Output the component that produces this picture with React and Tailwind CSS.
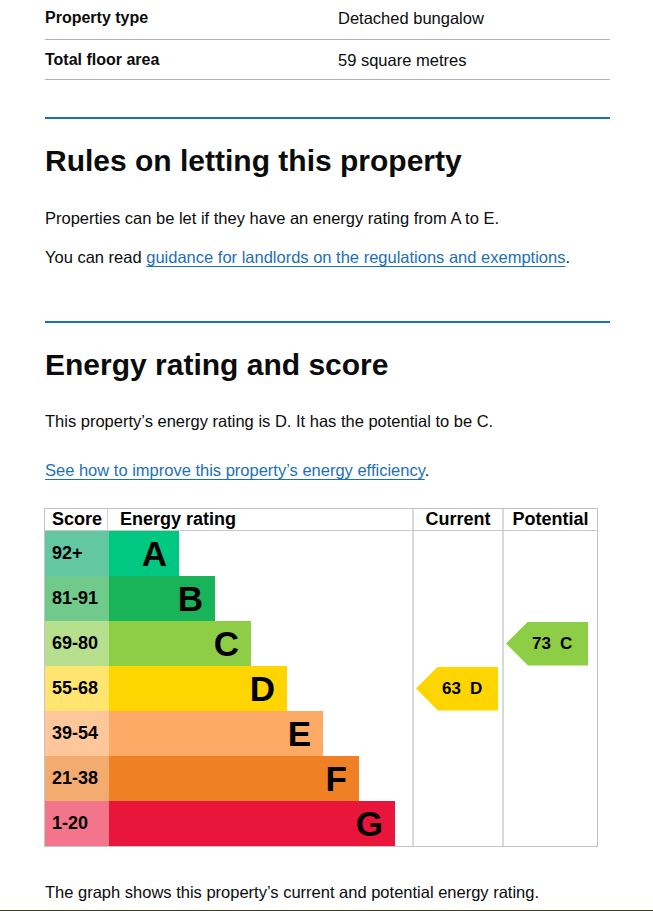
import React from "react";

const rows = [
  { score: "92+", letter: "A", w: "w-[70px]", bar: "bg-[#00c781]", bg: "bg-[#64c7a3]" },
  { score: "81-91", letter: "B", w: "w-[106px]", bar: "bg-[#19b459]", bg: "bg-[#6fca8c]" },
  { score: "69-80", letter: "C", w: "w-[142px]", bar: "bg-[#8dce46]", bg: "bg-[#b6df8e]" },
  { score: "55-68", letter: "D", w: "w-[178px]", bar: "bg-[#ffd500]", bg: "bg-[#ffe46f]" },
  { score: "39-54", letter: "E", w: "w-[214px]", bar: "bg-[#fcaa65]", bg: "bg-[#fec79b]" },
  { score: "21-38", letter: "F", w: "w-[250px]", bar: "bg-[#ef8023]", bg: "bg-[#f3ab70]" },
  { score: "1-20", letter: "G", w: "w-[286px]", bar: "bg-[#e9153b]", bg: "bg-[#f3758c]" },
];

function Arrow({ num, letter, color }) {
  return (
    <div
      className={`ml-[2px] w-[82px] h-[44px] ${color} [clip-path:polygon(0_50%,22px_0,100%_0,100%_100%,22px_100%)] flex items-center pl-[26px] gap-[9px] text-[17px] font-bold text-black leading-none`}
    >
      <span>{num}</span>
      <span>{letter}</span>
    </div>
  );
}

function Slots({ index, children }) {
  return (
    <div className="flex flex-col">
      {rows.map((r, i) => (
        <div key={r.letter} className="h-[45px] flex items-center">
          {i === index ? children : null}
        </div>
      ))}
    </div>
  );
}

export default function App() {
  return (
    <div className="bg-white text-[#0b0c0c] font-['Liberation_Sans',Arial,sans-serif]">
      <div className="pl-[45px] pr-[43px]">
        <dl className="text-[16.5px] leading-[20px]">
          <div className="flex border-b border-[#b1b4b6] pt-[8px] pb-[11px]">
            <dt className="w-[293px] font-bold text-[16px]">Property type</dt>
            <dd>Detached bungalow</dd>
          </div>
          <div className="flex border-b border-[#b1b4b6] pt-[10px] pb-[9px]">
            <dt className="w-[293px] font-bold text-[16px]">Total floor area</dt>
            <dd>59 square metres</dd>
          </div>
        </dl>

        <div className="mt-[37px] h-[2px] bg-[#1d70b8]" />
        <h2 className="mt-[25px] text-[30px] leading-[34px] font-bold">
          Rules on letting this property
        </h2>
        <p className="mt-[28px] text-[16.5px] leading-[24px]">
          Properties can be let if they have an energy rating from A to E.
        </p>
        <p className="mt-[15px] text-[16.5px] leading-[24px]">
          You can read{" "}
          <a
            href="#"
            className="text-[#1d70b8] underline decoration-1 underline-offset-[3px]"
          >
            guidance for landlords on the regulations and exemptions
          </a>
          .
        </p>

        <div className="mt-[52px] h-[2px] bg-[#1d70b8]" />
        <h2 className="mt-[25px] text-[30px] leading-[34px] font-bold">
          Energy rating and score
        </h2>
        <p className="mt-[27px] text-[16.5px] leading-[24px]">
          This property’s energy rating is D. It has the potential to be C.
        </p>
        <p className="mt-[25px] text-[16.5px] leading-[24px]">
          <a
            href="#"
            className="text-[#1d70b8] underline decoration-1 underline-offset-[3px]"
          >
            See how to improve this property’s energy efficiency
          </a>
          .
        </p>

        <div className="mt-[26px] -ml-[1px] w-[554px] border border-[#c4c4c4] text-black">
          <div className="flex h-[22px] border-b border-[#c8c8c8] text-[18px] leading-[21px] font-bold">
            <div className="w-[63px] pl-[7px] border-r border-[#d4d4d4]">Score</div>
            <div className="w-[304px] pl-[12px]">Energy rating</div>
            <div className="w-[90px] border-l-2 border-[#d9d9d9] text-center">Current</div>
            <div className="w-[95px] border-l-2 border-[#d9d9d9] text-center">Potential</div>
          </div>
          <div className="flex">
            <div className="flex flex-col w-[367px]">
              {rows.map((r) => (
                <div key={r.letter} className="flex h-[45px]">
                  <div
                    className={`w-[64px] ${r.bg} pl-[7px] flex items-center text-[18px] font-bold`}
                  >
                    {r.score}
                  </div>
                  <div
                    className={`${r.w} ${r.bar} flex items-center justify-end pr-[12px] text-[35px] font-bold leading-none`}
                  >
                    {r.letter}
                  </div>
                </div>
              ))}
            </div>
            <div className="w-[90px] border-l-2 border-[#d9d9d9]">
              <Slots index={3}>
                <Arrow num="63" letter="D" color="bg-[#ffd500]" />
              </Slots>
            </div>
            <div className="w-[95px] border-l-2 border-[#d9d9d9]">
              <Slots index={2}>
                <Arrow num="73" letter="C" color="bg-[#8dce46]" />
              </Slots>
            </div>
          </div>
        </div>

        <p className="mt-[33px] text-[16.5px] leading-[24px]">
          The graph shows this property’s current and potential energy rating.
        </p>
      </div>
      <div className="mt-[6px] h-[2px] bg-[#3d3b26]" />
    </div>
  );
}
